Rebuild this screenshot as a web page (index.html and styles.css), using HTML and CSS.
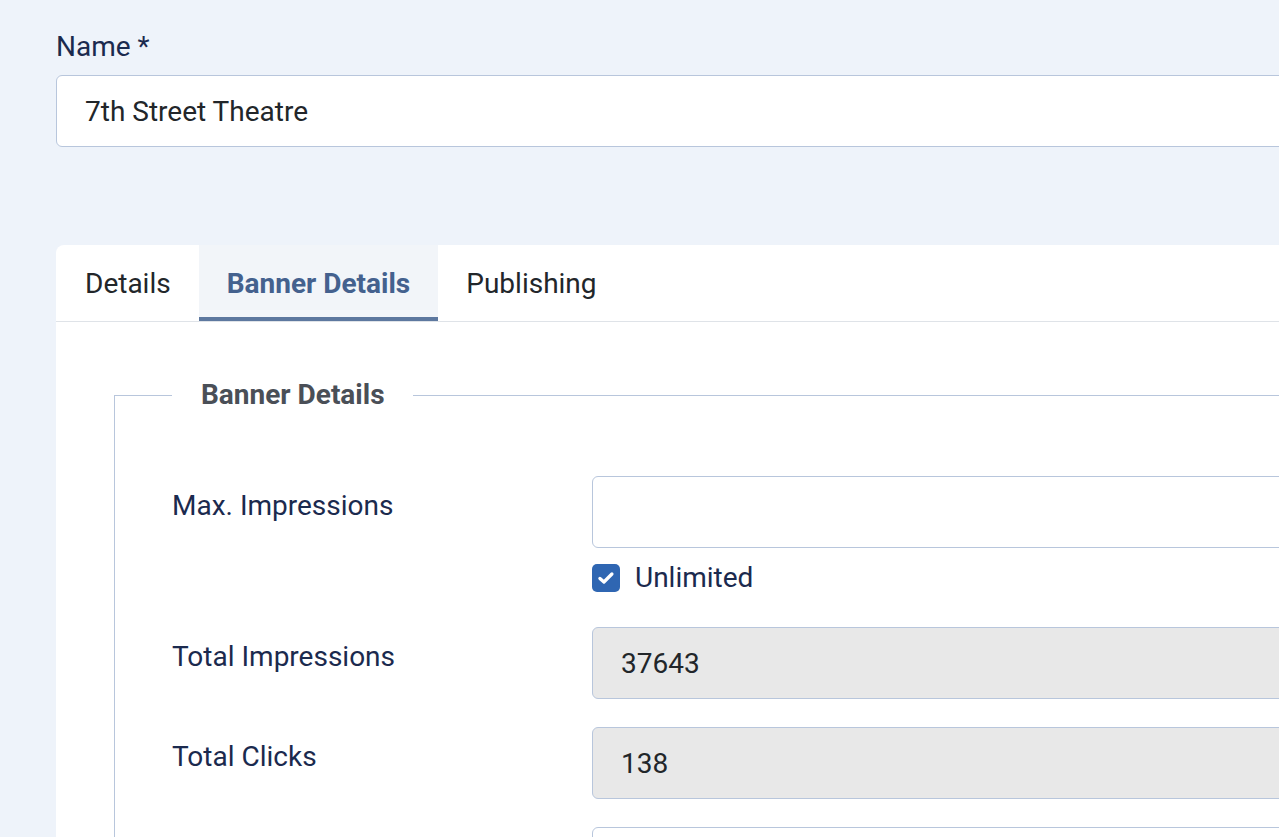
FILE: index.html
```html
<!DOCTYPE html>
<html lang="en">
<head>
<title>Banner: Edit</title>
<meta charset="utf-8">
<meta name="viewport" content="width=device-width, initial-scale=1">
<link rel="stylesheet" href="styles.css">
</head>
<body>

<div class="page">

  <div class="title-group">
    <label class="title-label" for="jform_name">Name *</label>
    <input class="form-control" type="text" id="jform_name" value="7th Street Theatre">
  </div>

  <div class="card">
    <div class="tabs">
      <button type="button" class="tab">Details</button>
      <button type="button" class="tab active">Banner Details</button>
      <button type="button" class="tab">Publishing</button>
    </div>

    <div class="tab-body">
      <fieldset class="options">
        <legend>Banner Details</legend>

        <div class="control-group">
          <label class="control-label" for="jform_imptotal">Max. Impressions</label>
          <div class="controls">
            <input class="form-control" type="text" id="jform_imptotal" value="">
            <div class="check-row">
              <span class="checkbox">
                <svg width="22" height="22" viewBox="0 0 16 16"><path d="M3.6 8.3 L6.5 10.9 L12.3 5.1" fill="none" stroke="#fff" stroke-width="2.4" stroke-linecap="round" stroke-linejoin="round"/></svg>
              </span>
              <label for="jform_imptotal">Unlimited</label>
            </div>
          </div>
        </div>

        <div class="control-group">
          <label class="control-label" for="jform_impmade">Total Impressions</label>
          <div class="controls">
            <input class="form-control readonly" type="text" id="jform_impmade" value="37643" readonly>
          </div>
        </div>

        <div class="control-group">
          <label class="control-label" for="jform_clicks">Total Clicks</label>
          <div class="controls">
            <input class="form-control readonly" type="text" id="jform_clicks" value="138" readonly>
          </div>
        </div>

        <div class="control-group">
          <label class="control-label" for="jform_clickurl">&nbsp;</label>
          <div class="controls">
            <input class="form-control" type="text" id="jform_clickurl" value="">
          </div>
        </div>

      </fieldset>
    </div>
  </div>

</div>

</body>
</html>
```

FILE: styles.css
```css
* {
  box-sizing: border-box;
}

html, body {
  margin: 0;
  overflow: hidden;
}

body {
  font-family: Roboto, "Liberation Sans", Arial, sans-serif;
  font-size: 28px;
  line-height: 36px;
  background-color: #eef3fa;
  color: #22262a;
}

.page {
  width: 1500px;
  padding: 29px 0 0 56px;
}

/* Name field */
.title-label {
  display: block;
  color: #1b2a4e;
  margin-bottom: 10px;
}

.form-control {
  display: block;
  width: 100%;
  height: 72px;
  padding: 1px 28px 0;
  font-family: inherit;
  font-size: 28px;
  color: #22262a;
  background-color: #fff;
  border: 1px solid #b8c6dc;
  border-radius: 6px;
  outline: none;
}

.form-control.readonly {
  background-color: #e8e8e8;
}

/* Card with tabs */
.card {
  margin-top: 98px;
  background-color: #fff;
  border-radius: 8px 0 0 0;
  height: 700px;
}

.tabs {
  display: flex;
  border-bottom: 1px solid #dfe3e8;
}

.tab {
  height: 76px;
  padding: 4px 28px 0 28px;
  font-family: inherit;
  font-size: 28px;
  color: #22262a;
  background: transparent;
  border: 0;
  border-bottom: 4px solid transparent;
  cursor: pointer;
}

.tab:first-child {
  border-top-left-radius: 8px;
  padding-left: 29px;
}

.tab.active {
  background-color: #f2f5f9;
  color: #44618e;
  font-weight: bold;
  border-bottom-color: #5d789f;
}

.tab-body {
  padding: 55px 0 0 58px;
}

/* Fieldset */
fieldset.options {
  margin: 0;
  padding: 63px 0 0 57px;
  border: 0;
  border-top: 1px solid #b8c6dc;
  border-left: 1px solid #b8c6dc;
  min-width: 0;
}

fieldset.options legend {
  padding: 0 28px 0 29px;
  font-weight: bold;
  color: #4a4f57;
}

.control-group {
  display: flex;
  margin-bottom: 28px;
}

.control-label {
  width: 420px;
  flex-shrink: 0;
  padding-top: 12px;
  color: #1b2a4e;
}

.controls {
  flex: 1;
}

.check-row {
  display: flex;
  align-items: center;
  gap: 15px;
  margin-top: 12px;
  margin-bottom: 3px;
  color: #1b2a4e;
}

.checkbox {
  width: 28px;
  height: 28px;
  border-radius: 5px;
  background-color: #2f66b2;
  display: flex;
  align-items: center;
  justify-content: center;
}
```
